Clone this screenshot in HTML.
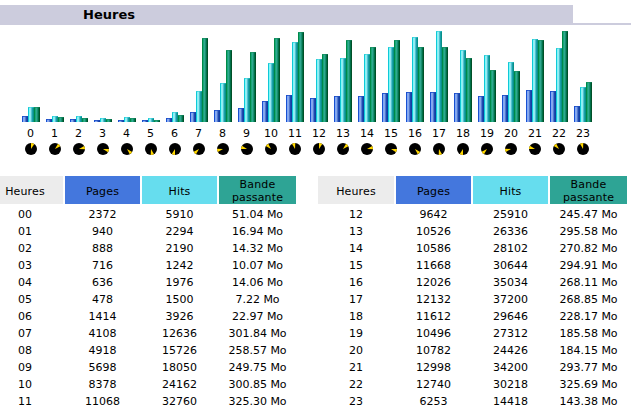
<!DOCTYPE html>
<html><head><meta charset="utf-8"><title>Heures</title>
<style>
html,body{margin:0;padding:0;background:#fff;}
body{width:631px;height:417px;position:relative;overflow:hidden;font-family:"DejaVu Sans","Liberation Sans",sans-serif;font-size:11px;color:#000;}
.a{position:absolute;}
.title{left:0;top:5px;width:573px;height:18px;background:#CCCCDD;}
.tline{left:0;top:23px;width:631px;height:2px;background:#CCCCDD;}
.tt{left:59px;top:5px;width:100px;height:18px;line-height:19px;text-align:center;font-weight:bold;font-size:13px;}
.b{position:absolute;width:6px;}
.p{background:linear-gradient(90deg,#1850d0 0,#1850d0 1px,#80a8f8 1px,#80a8f8 2px,#88a8e8 2px,#88a8e8 3px,#5078d0 3px,#5078d0 4px,#2048b0 4px,#2048b0 5px,#1040a0 5px);}
.h{background:linear-gradient(90deg,#10c8d8 0,#10c8d8 1px,#80f8f8 1px,#80f8f8 2px,#98e8f0 2px,#98e8f0 3px,#50c0d0 3px,#50c0d0 4px,#18a0a8 4px,#18a0a8 5px,#089088 5px);}
.k{background:linear-gradient(90deg,#008848 0,#008848 1px,#18a878 1px,#18a878 2px,#30a890 2px,#30a890 3px,#189070 3px,#189070 4px,#007048 4px,#007048 5px,#005028 5px);}
.b::before{content:"";position:absolute;left:0;top:0;width:6px;height:1px;}
.p::before{background:linear-gradient(90deg,#1848c8,#3060d0 40%,#1040b0);}
.h::before{background:linear-gradient(90deg,#20c8d0,#58e0e8 40%,#10a0a8);}
.k::before{background:linear-gradient(90deg,#109058,#209870 40%,#006840);}
.hl{position:absolute;top:127px;margin-left:-0.5px;width:24px;height:14px;line-height:14px;text-align:center;}
.ck{position:absolute;top:143px;width:12px;height:12px;}
.th{position:absolute;top:176px;height:26px;padding-top:2px;text-align:center;line-height:13px;letter-spacing:0.15px;}
.th span{display:block;}
.th.one{line-height:28px;overflow:hidden;}
.td{position:absolute;height:17px;line-height:17px;text-align:center;}
</style></head><body>
<div class="a title"></div><div class="a tline"></div><div class="a tt">Heures</div>

<div class="b p" style="left:22px;top:116px;height:6px"></div><div class="b h" style="left:28px;top:107px;height:15px"></div><div class="b k" style="left:34px;top:107px;height:15px"></div>
<div class="hl" style="left:19px">0</div>
<svg class="ck" style="left:25px" viewBox="0 0 12 12"><circle cx="6" cy="6" r="6" fill="#000"/><path d="M6 6L6.00 0.00A6 6 0 0 1 9.27 0.97Z" fill="#FFD700"/></svg>
<div class="b p" style="left:46px;top:119px;height:3px"></div><div class="b h" style="left:52px;top:116px;height:6px"></div><div class="b k" style="left:58px;top:117px;height:5px"></div>
<div class="hl" style="left:43px">1</div>
<svg class="ck" style="left:49px" viewBox="0 0 12 12"><circle cx="6" cy="6" r="6" fill="#000"/><path d="M6 6L9.00 0.80A6 6 0 0 1 11.35 3.28Z" fill="#FFD700"/></svg>
<div class="b p" style="left:70px;top:119px;height:3px"></div><div class="b h" style="left:76px;top:116px;height:6px"></div><div class="b k" style="left:82px;top:118px;height:4px"></div>
<div class="hl" style="left:67px">2</div>
<svg class="ck" style="left:73px" viewBox="0 0 12 12"><circle cx="6" cy="6" r="6" fill="#000"/><path d="M6 6L11.20 3.00A6 6 0 0 1 11.99 6.31Z" fill="#FFD700"/></svg>
<div class="b p" style="left:94px;top:120px;height:2px"></div><div class="b h" style="left:100px;top:118px;height:4px"></div><div class="b k" style="left:106px;top:119px;height:3px"></div>
<div class="hl" style="left:91px">3</div>
<svg class="ck" style="left:97px" viewBox="0 0 12 12"><circle cx="6" cy="6" r="6" fill="#000"/><path d="M6 6L12.00 6.00A6 6 0 0 1 11.03 9.27Z" fill="#FFD700"/></svg>
<div class="b p" style="left:118px;top:120px;height:2px"></div><div class="b h" style="left:124px;top:117px;height:5px"></div><div class="b k" style="left:130px;top:118px;height:4px"></div>
<div class="hl" style="left:115px">4</div>
<svg class="ck" style="left:121px" viewBox="0 0 12 12"><circle cx="6" cy="6" r="6" fill="#000"/><path d="M6 6L11.20 9.00A6 6 0 0 1 8.72 11.35Z" fill="#FFD700"/></svg>
<div class="b p" style="left:142px;top:120px;height:2px"></div><div class="b h" style="left:148px;top:118px;height:4px"></div><div class="b k" style="left:154px;top:120px;height:2px"></div>
<div class="hl" style="left:139px">5</div>
<svg class="ck" style="left:145px" viewBox="0 0 12 12"><circle cx="6" cy="6" r="6" fill="#000"/><path d="M6 6L9.00 11.20A6 6 0 0 1 5.69 11.99Z" fill="#FFD700"/></svg>
<div class="b p" style="left:166px;top:118px;height:4px"></div><div class="b h" style="left:172px;top:112px;height:10px"></div><div class="b k" style="left:178px;top:115px;height:7px"></div>
<div class="hl" style="left:163px">6</div>
<svg class="ck" style="left:169px" viewBox="0 0 12 12"><circle cx="6" cy="6" r="6" fill="#000"/><path d="M6 6L6.00 12.00A6 6 0 0 1 2.73 11.03Z" fill="#FFD700"/></svg>
<div class="b p" style="left:190px;top:112px;height:10px"></div><div class="b h" style="left:196px;top:91px;height:31px"></div><div class="b k" style="left:202px;top:38px;height:84px"></div>
<div class="hl" style="left:187px">7</div>
<svg class="ck" style="left:193px" viewBox="0 0 12 12"><circle cx="6" cy="6" r="6" fill="#000"/><path d="M6 6L3.00 11.20A6 6 0 0 1 0.65 8.72Z" fill="#FFD700"/></svg>
<div class="b p" style="left:214px;top:110px;height:12px"></div><div class="b h" style="left:220px;top:83px;height:39px"></div><div class="b k" style="left:226px;top:50px;height:72px"></div>
<div class="hl" style="left:211px">8</div>
<svg class="ck" style="left:217px" viewBox="0 0 12 12"><circle cx="6" cy="6" r="6" fill="#000"/><path d="M6 6L0.80 9.00A6 6 0 0 1 0.01 5.69Z" fill="#FFD700"/></svg>
<div class="b p" style="left:238px;top:108px;height:14px"></div><div class="b h" style="left:244px;top:78px;height:44px"></div><div class="b k" style="left:250px;top:52px;height:70px"></div>
<div class="hl" style="left:235px">9</div>
<svg class="ck" style="left:241px" viewBox="0 0 12 12"><circle cx="6" cy="6" r="6" fill="#000"/><path d="M6 6L0.00 6.00A6 6 0 0 1 0.97 2.73Z" fill="#FFD700"/></svg>
<div class="b p" style="left:262px;top:101px;height:21px"></div><div class="b h" style="left:268px;top:63px;height:59px"></div><div class="b k" style="left:274px;top:38px;height:84px"></div>
<div class="hl" style="left:259.5px">10</div>
<svg class="ck" style="left:265px" viewBox="0 0 12 12"><circle cx="6" cy="6" r="6" fill="#000"/><path d="M6 6L0.80 3.00A6 6 0 0 1 3.28 0.65Z" fill="#FFD700"/></svg>
<div class="b p" style="left:286px;top:95px;height:27px"></div><div class="b h" style="left:292px;top:42px;height:80px"></div><div class="b k" style="left:298px;top:32px;height:90px"></div>
<div class="hl" style="left:283.5px">11</div>
<svg class="ck" style="left:289px" viewBox="0 0 12 12"><circle cx="6" cy="6" r="6" fill="#000"/><path d="M6 6L3.00 0.80A6 6 0 0 1 6.31 0.01Z" fill="#FFD700"/></svg>
<div class="b p" style="left:310px;top:98px;height:24px"></div><div class="b h" style="left:316px;top:59px;height:63px"></div><div class="b k" style="left:322px;top:54px;height:68px"></div>
<div class="hl" style="left:307.5px">12</div>
<svg class="ck" style="left:313px" viewBox="0 0 12 12"><circle cx="6" cy="6" r="6" fill="#000"/><path d="M6 6L6.00 0.00A6 6 0 0 1 9.27 0.97Z" fill="#FFD700"/></svg>
<div class="b p" style="left:334px;top:96px;height:26px"></div><div class="b h" style="left:340px;top:58px;height:64px"></div><div class="b k" style="left:346px;top:40px;height:82px"></div>
<div class="hl" style="left:331.5px">13</div>
<svg class="ck" style="left:337px" viewBox="0 0 12 12"><circle cx="6" cy="6" r="6" fill="#000"/><path d="M6 6L9.00 0.80A6 6 0 0 1 11.35 3.28Z" fill="#FFD700"/></svg>
<div class="b p" style="left:358px;top:96px;height:26px"></div><div class="b h" style="left:364px;top:54px;height:68px"></div><div class="b k" style="left:370px;top:47px;height:75px"></div>
<div class="hl" style="left:355.5px">14</div>
<svg class="ck" style="left:361px" viewBox="0 0 12 12"><circle cx="6" cy="6" r="6" fill="#000"/><path d="M6 6L11.20 3.00A6 6 0 0 1 11.99 6.31Z" fill="#FFD700"/></svg>
<div class="b p" style="left:382px;top:93px;height:29px"></div><div class="b h" style="left:388px;top:47px;height:75px"></div><div class="b k" style="left:394px;top:40px;height:82px"></div>
<div class="hl" style="left:379.5px">15</div>
<svg class="ck" style="left:385px" viewBox="0 0 12 12"><circle cx="6" cy="6" r="6" fill="#000"/><path d="M6 6L12.00 6.00A6 6 0 0 1 11.03 9.27Z" fill="#FFD700"/></svg>
<div class="b p" style="left:406px;top:92px;height:30px"></div><div class="b h" style="left:412px;top:37px;height:85px"></div><div class="b k" style="left:418px;top:47px;height:75px"></div>
<div class="hl" style="left:403.5px">16</div>
<svg class="ck" style="left:409px" viewBox="0 0 12 12"><circle cx="6" cy="6" r="6" fill="#000"/><path d="M6 6L11.20 9.00A6 6 0 0 1 8.72 11.35Z" fill="#FFD700"/></svg>
<div class="b p" style="left:430px;top:92px;height:30px"></div><div class="b h" style="left:436px;top:31px;height:91px"></div><div class="b k" style="left:442px;top:47px;height:75px"></div>
<div class="hl" style="left:427.5px">17</div>
<svg class="ck" style="left:433px" viewBox="0 0 12 12"><circle cx="6" cy="6" r="6" fill="#000"/><path d="M6 6L9.00 11.20A6 6 0 0 1 5.69 11.99Z" fill="#FFD700"/></svg>
<div class="b p" style="left:454px;top:93px;height:29px"></div><div class="b h" style="left:460px;top:50px;height:72px"></div><div class="b k" style="left:466px;top:58px;height:64px"></div>
<div class="hl" style="left:451.5px">18</div>
<svg class="ck" style="left:457px" viewBox="0 0 12 12"><circle cx="6" cy="6" r="6" fill="#000"/><path d="M6 6L6.00 12.00A6 6 0 0 1 2.73 11.03Z" fill="#FFD700"/></svg>
<div class="b p" style="left:478px;top:96px;height:26px"></div><div class="b h" style="left:484px;top:55px;height:67px"></div><div class="b k" style="left:490px;top:70px;height:52px"></div>
<div class="hl" style="left:475.5px">19</div>
<svg class="ck" style="left:481px" viewBox="0 0 12 12"><circle cx="6" cy="6" r="6" fill="#000"/><path d="M6 6L3.00 11.20A6 6 0 0 1 0.65 8.72Z" fill="#FFD700"/></svg>
<div class="b p" style="left:502px;top:95px;height:27px"></div><div class="b h" style="left:508px;top:62px;height:60px"></div><div class="b k" style="left:514px;top:71px;height:51px"></div>
<div class="hl" style="left:499.5px">20</div>
<svg class="ck" style="left:505px" viewBox="0 0 12 12"><circle cx="6" cy="6" r="6" fill="#000"/><path d="M6 6L0.80 9.00A6 6 0 0 1 0.01 5.69Z" fill="#FFD700"/></svg>
<div class="b p" style="left:526px;top:90px;height:32px"></div><div class="b h" style="left:532px;top:39px;height:83px"></div><div class="b k" style="left:538px;top:40px;height:82px"></div>
<div class="hl" style="left:523.5px">21</div>
<svg class="ck" style="left:529px" viewBox="0 0 12 12"><circle cx="6" cy="6" r="6" fill="#000"/><path d="M6 6L0.00 6.00A6 6 0 0 1 0.97 2.73Z" fill="#FFD700"/></svg>
<div class="b p" style="left:550px;top:91px;height:31px"></div><div class="b h" style="left:556px;top:48px;height:74px"></div><div class="b k" style="left:562px;top:31px;height:91px"></div>
<div class="hl" style="left:547.5px">22</div>
<svg class="ck" style="left:553px" viewBox="0 0 12 12"><circle cx="6" cy="6" r="6" fill="#000"/><path d="M6 6L0.80 3.00A6 6 0 0 1 3.28 0.65Z" fill="#FFD700"/></svg>
<div class="b p" style="left:574px;top:106px;height:16px"></div><div class="b h" style="left:580px;top:87px;height:35px"></div><div class="b k" style="left:586px;top:82px;height:40px"></div>
<div class="hl" style="left:571.5px">23</div>
<svg class="ck" style="left:577px" viewBox="0 0 12 12"><circle cx="6" cy="6" r="6" fill="#000"/><path d="M6 6L3.00 0.80A6 6 0 0 1 6.31 0.01Z" fill="#FFD700"/></svg>
<div class="th one" style="left:-13px;width:76px;background:#ECECEC">Heures</div>
<div class="th one" style="left:65px;width:75px;background:#4477DD">Pages</div>
<div class="th one" style="left:142px;width:75px;background:#66DDEE">Hits</div>
<div class="th" style="left:219px;width:77px;background:#2EA495">Bande<br>passante</div>
<div class="th one" style="left:318px;width:76px;background:#ECECEC">Heures</div>
<div class="th one" style="left:396px;width:75px;background:#4477DD">Pages</div>
<div class="th one" style="left:473px;width:75px;background:#66DDEE">Hits</div>
<div class="th" style="left:550px;width:77px;background:#2EA495">Bande<br>passante</div>
<div class="td" style="left:-13px;width:76px;top:206px">00</div>
<div class="td" style="left:65px;width:75px;top:206px">2372</div>
<div class="td" style="left:142px;width:75px;top:206px">5910</div>
<div class="td" style="left:219px;width:77px;top:206px">51.04 Mo</div>
<div class="td" style="left:-13px;width:76px;top:223px">01</div>
<div class="td" style="left:65px;width:75px;top:223px">940</div>
<div class="td" style="left:142px;width:75px;top:223px">2294</div>
<div class="td" style="left:219px;width:77px;top:223px">16.94 Mo</div>
<div class="td" style="left:-13px;width:76px;top:240px">02</div>
<div class="td" style="left:65px;width:75px;top:240px">888</div>
<div class="td" style="left:142px;width:75px;top:240px">2190</div>
<div class="td" style="left:219px;width:77px;top:240px">14.32 Mo</div>
<div class="td" style="left:-13px;width:76px;top:257px">03</div>
<div class="td" style="left:65px;width:75px;top:257px">716</div>
<div class="td" style="left:142px;width:75px;top:257px">1242</div>
<div class="td" style="left:219px;width:77px;top:257px">10.07 Mo</div>
<div class="td" style="left:-13px;width:76px;top:274px">04</div>
<div class="td" style="left:65px;width:75px;top:274px">636</div>
<div class="td" style="left:142px;width:75px;top:274px">1976</div>
<div class="td" style="left:219px;width:77px;top:274px">14.06 Mo</div>
<div class="td" style="left:-13px;width:76px;top:291px">05</div>
<div class="td" style="left:65px;width:75px;top:291px">478</div>
<div class="td" style="left:142px;width:75px;top:291px">1500</div>
<div class="td" style="left:219px;width:77px;top:291px">7.22 Mo</div>
<div class="td" style="left:-13px;width:76px;top:308px">06</div>
<div class="td" style="left:65px;width:75px;top:308px">1414</div>
<div class="td" style="left:142px;width:75px;top:308px">3926</div>
<div class="td" style="left:219px;width:77px;top:308px">22.97 Mo</div>
<div class="td" style="left:-13px;width:76px;top:325px">07</div>
<div class="td" style="left:65px;width:75px;top:325px">4108</div>
<div class="td" style="left:142px;width:75px;top:325px">12636</div>
<div class="td" style="left:219px;width:77px;top:325px">301.84 Mo</div>
<div class="td" style="left:-13px;width:76px;top:342px">08</div>
<div class="td" style="left:65px;width:75px;top:342px">4918</div>
<div class="td" style="left:142px;width:75px;top:342px">15726</div>
<div class="td" style="left:219px;width:77px;top:342px">258.57 Mo</div>
<div class="td" style="left:-13px;width:76px;top:359px">09</div>
<div class="td" style="left:65px;width:75px;top:359px">5698</div>
<div class="td" style="left:142px;width:75px;top:359px">18050</div>
<div class="td" style="left:219px;width:77px;top:359px">249.75 Mo</div>
<div class="td" style="left:-13px;width:76px;top:376px">10</div>
<div class="td" style="left:65px;width:75px;top:376px">8378</div>
<div class="td" style="left:142px;width:75px;top:376px">24162</div>
<div class="td" style="left:219px;width:77px;top:376px">300.85 Mo</div>
<div class="td" style="left:-13px;width:76px;top:393px">11</div>
<div class="td" style="left:65px;width:75px;top:393px">11068</div>
<div class="td" style="left:142px;width:75px;top:393px">32760</div>
<div class="td" style="left:219px;width:77px;top:393px">325.30 Mo</div>
<div class="td" style="left:318px;width:76px;top:206px">12</div>
<div class="td" style="left:396px;width:75px;top:206px">9642</div>
<div class="td" style="left:473px;width:75px;top:206px">25910</div>
<div class="td" style="left:550px;width:77px;top:206px">245.47 Mo</div>
<div class="td" style="left:318px;width:76px;top:223px">13</div>
<div class="td" style="left:396px;width:75px;top:223px">10526</div>
<div class="td" style="left:473px;width:75px;top:223px">26336</div>
<div class="td" style="left:550px;width:77px;top:223px">295.58 Mo</div>
<div class="td" style="left:318px;width:76px;top:240px">14</div>
<div class="td" style="left:396px;width:75px;top:240px">10586</div>
<div class="td" style="left:473px;width:75px;top:240px">28102</div>
<div class="td" style="left:550px;width:77px;top:240px">270.82 Mo</div>
<div class="td" style="left:318px;width:76px;top:257px">15</div>
<div class="td" style="left:396px;width:75px;top:257px">11668</div>
<div class="td" style="left:473px;width:75px;top:257px">30644</div>
<div class="td" style="left:550px;width:77px;top:257px">294.91 Mo</div>
<div class="td" style="left:318px;width:76px;top:274px">16</div>
<div class="td" style="left:396px;width:75px;top:274px">12026</div>
<div class="td" style="left:473px;width:75px;top:274px">35034</div>
<div class="td" style="left:550px;width:77px;top:274px">268.11 Mo</div>
<div class="td" style="left:318px;width:76px;top:291px">17</div>
<div class="td" style="left:396px;width:75px;top:291px">12132</div>
<div class="td" style="left:473px;width:75px;top:291px">37200</div>
<div class="td" style="left:550px;width:77px;top:291px">268.85 Mo</div>
<div class="td" style="left:318px;width:76px;top:308px">18</div>
<div class="td" style="left:396px;width:75px;top:308px">11612</div>
<div class="td" style="left:473px;width:75px;top:308px">29646</div>
<div class="td" style="left:550px;width:77px;top:308px">228.17 Mo</div>
<div class="td" style="left:318px;width:76px;top:325px">19</div>
<div class="td" style="left:396px;width:75px;top:325px">10496</div>
<div class="td" style="left:473px;width:75px;top:325px">27312</div>
<div class="td" style="left:550px;width:77px;top:325px">185.58 Mo</div>
<div class="td" style="left:318px;width:76px;top:342px">20</div>
<div class="td" style="left:396px;width:75px;top:342px">10782</div>
<div class="td" style="left:473px;width:75px;top:342px">24426</div>
<div class="td" style="left:550px;width:77px;top:342px">184.15 Mo</div>
<div class="td" style="left:318px;width:76px;top:359px">21</div>
<div class="td" style="left:396px;width:75px;top:359px">12998</div>
<div class="td" style="left:473px;width:75px;top:359px">34200</div>
<div class="td" style="left:550px;width:77px;top:359px">293.77 Mo</div>
<div class="td" style="left:318px;width:76px;top:376px">22</div>
<div class="td" style="left:396px;width:75px;top:376px">12740</div>
<div class="td" style="left:473px;width:75px;top:376px">30218</div>
<div class="td" style="left:550px;width:77px;top:376px">325.69 Mo</div>
<div class="td" style="left:318px;width:76px;top:393px">23</div>
<div class="td" style="left:396px;width:75px;top:393px">6253</div>
<div class="td" style="left:473px;width:75px;top:393px">14418</div>
<div class="td" style="left:550px;width:77px;top:393px">143.38 Mo</div>
</body></html>
